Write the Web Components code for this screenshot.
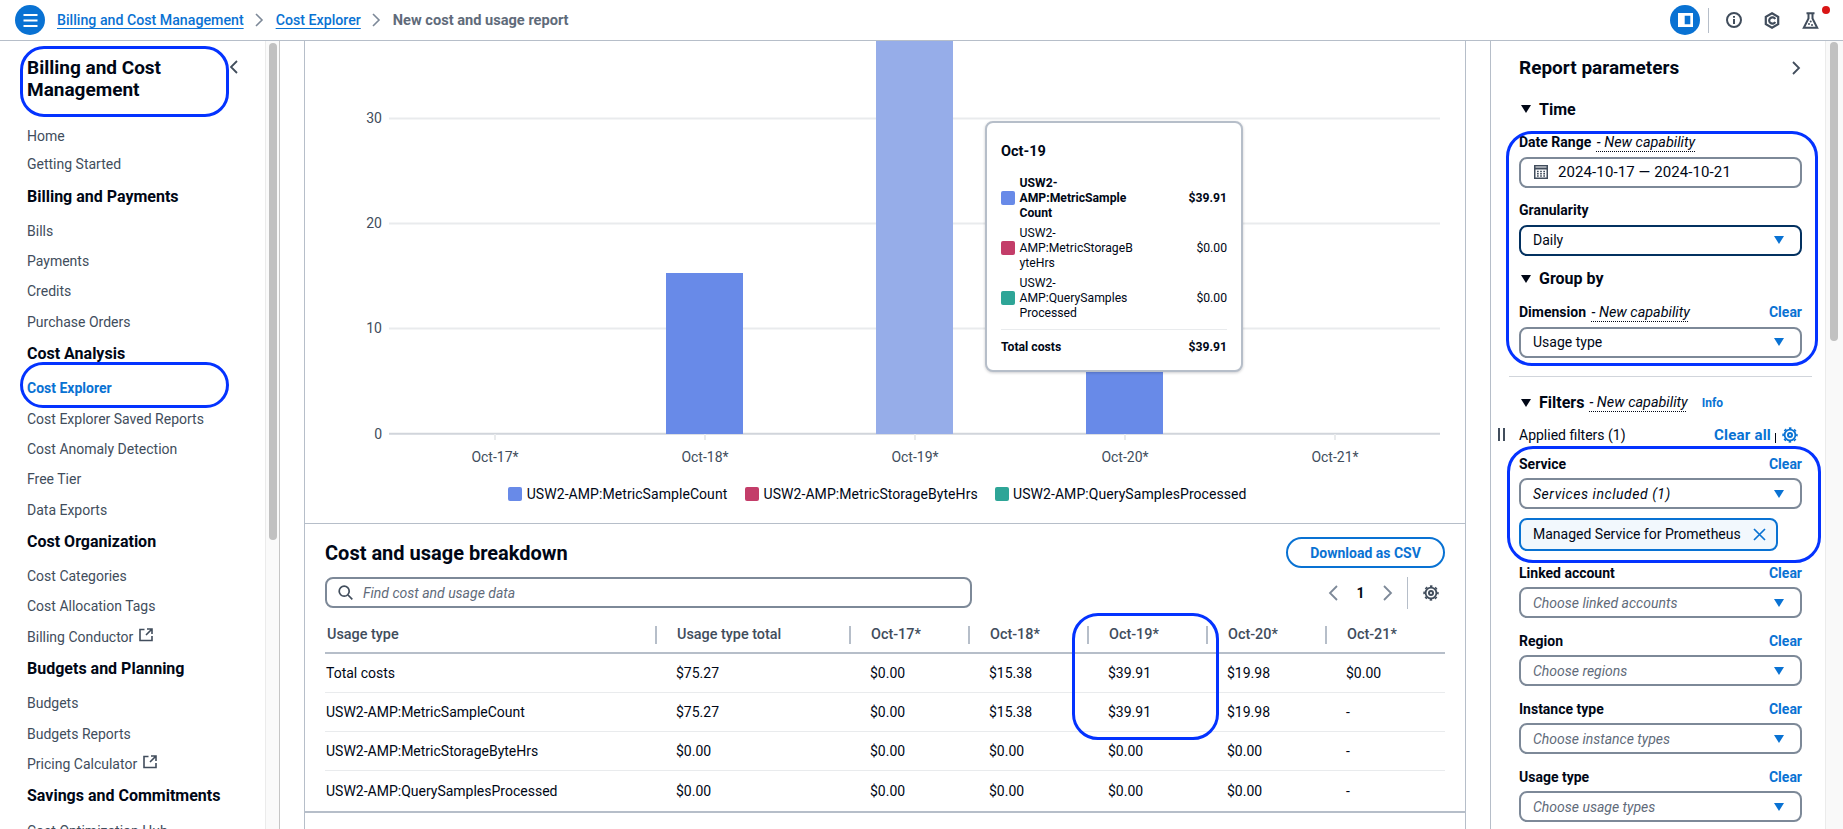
<!DOCTYPE html>
<html lang="en"><head><meta charset="utf-8"><title>Cost Explorer</title>
<style>
html,body{margin:0;padding:0;height:829px;overflow:hidden;background:#fff;}
body{font-family:Roboto,"Open Sans",sans-serif;font-size:14px;color:#000716;}
</style></head><body>
<app-shell></app-shell>
<script>
const GEAR=`<svg width="16" height="16" viewBox="0 0 16 16" fill="none" stroke="currentColor"><circle cx="8" cy="8" r="2" stroke-width="2"/><circle cx="8" cy="8" r="5.4" stroke-width="1.8"/><circle cx="8" cy="8" r="6.9" stroke-width="1.6" stroke-dasharray="2.6 2.82" stroke-dashoffset="1.3"/></svg>`;
const CARET=`<svg width="10" height="8" viewBox="0 0 10 8"><path d="M0 0h10L5 8z" fill="#0972d3"/></svg>`;

class AppShell extends HTMLElement{connectedCallback(){
 const s=this.attachShadow({mode:'open'});
 s.innerHTML=`<style>
 :host{display:block;position:relative;width:1843px;height:829px;overflow:hidden}
 .body{display:flex;height:788px}
 .gap{width:24px;flex:none}
 </style>
 <top-bar></top-bar>
 <div class="body">
  <side-nav></side-nav><div class="gap"></div>
  <main-content></main-content><div class="gap"></div>
  <report-panel></report-panel>
 </div>
 <annot-box style="left:20px;top:46px;width:209px;height:71px;--r:24px"></annot-box>
 <annot-box style="left:20px;top:362px;width:209px;height:46px;--r:23px"></annot-box>
 <annot-box style="left:1072px;top:613px;width:147px;height:127px;--r:26px"></annot-box>
 <annot-box style="left:1506px;top:130.5px;width:312px;height:235.5px;--r:26px"></annot-box>
 <annot-box style="left:1507px;top:446px;width:314px;height:117px;--r:26px"></annot-box>`;
}}
class AnnotBox extends HTMLElement{connectedCallback(){
 const s=this.attachShadow({mode:'open'});
 s.innerHTML=`<style>:host{display:block;position:absolute;box-sizing:border-box;border:3.5px solid #0433ff;border-radius:var(--r);pointer-events:none}</style>`;
}}
class TopBar extends HTMLElement{connectedCallback(){
 const s=this.attachShadow({mode:'open'});
 s.innerHTML=`<style>
 :host{display:flex;align-items:center;height:40px;border-bottom:1px solid #b6bec9;padding-left:15px;box-sizing:content-box;font-size:14.2px}
 .menu{width:30px;height:30px;border-radius:50%;background:#0972d3;display:flex;align-items:center;justify-content:center;flex:none;margin-right:12px}
 a{color:#0972d3;text-decoration:underline;text-underline-offset:3px;font-weight:500}
 .chev{width:32px;display:flex;justify-content:center;flex:none}
 .cur{color:#5f6b7a;font-weight:700;font-size:14.6px}
 .sp{flex:1}
 .btn{width:30px;height:30px;border-radius:50%;background:#0972d3;display:flex;align-items:center;justify-content:center;margin-right:8px}
 .sep{width:1px;height:25px;background:#b6bec9;margin-right:13px}
 .ic{width:24px;height:24px;display:flex;align-items:center;justify-content:center;position:relative;margin-right:14px;color:#414d5c}
 .dot{position:absolute;right:-8px;top:-2px;width:8px;height:8px;border-radius:50%;background:#d91515}
 </style>
 <div class="menu"><svg width="15" height="13" viewBox="0 0 15 13" stroke="#fff" stroke-width="2"><path d="M0.5 1h14M0.5 6.5h14M0.5 12h14"/></svg></div>
 <a>Billing and Cost Management</a>
 <span class="chev"><svg width="9" height="14" viewBox="0 0 9 14" fill="none" stroke="#7d8998" stroke-width="1.6"><path d="M1 1l6 6-6 6"/></svg></span>
 <a>Cost Explorer</a>
 <span class="chev"><svg width="9" height="14" viewBox="0 0 9 14" fill="none" stroke="#7d8998" stroke-width="1.6"><path d="M1 1l6 6-6 6"/></svg></span>
 <span class="cur">New cost and usage report</span>
 <span class="sp"></span>
 <div class="btn"><svg width="15" height="14" viewBox="0 0 15 14"><path fill="#fff" fill-rule="evenodd" d="M0 0h15v14H0zM6.7 2.7v8.6h5.6V2.7z"/></svg></div>
 <div class="sep"></div>
 <div class="ic"><svg width="16" height="16" viewBox="0 0 16 16" fill="none" stroke="currentColor" stroke-width="2"><circle cx="8" cy="8" r="7"/><path d="M8 7v5M8 4v1.8"/></svg></div>
 <div class="ic"><svg width="16" height="17" viewBox="0 0 16 17" fill="none" stroke="currentColor" stroke-width="2.2"><path d="M8 1.3l6.2 3.6v7.2L8 15.7l-6.2-3.6V4.9z"/><path d="M11.2 7A3.2 3.2 0 1 0 11.2 10"/></svg></div>
 <div class="ic" style="margin-right:21px"><svg width="17" height="17" viewBox="0 0 17 17" fill="none" stroke="currentColor" stroke-width="2"><path d="M4.5 1.2h8M6.5 1.2v5.3L1.8 15.8h13.4L10.5 6.5V1.2"/><circle cx="7" cy="12" r="1" fill="currentColor" stroke="none"/><circle cx="10" cy="13" r="1" fill="currentColor" stroke="none"/><circle cx="8.7" cy="9.5" r="1" fill="currentColor" stroke="none"/></svg><span class="dot"></span></div>`;
}}
class NavItem extends HTMLElement{connectedCallback(){
 const s=this.attachShadow({mode:'open'});
 const ext=this.hasAttribute('ext');
 s.innerHTML=`<style>
 :host{display:flex;align-items:center;height:30.3px;font-size:14px;color:#414d5c;white-space:nowrap}
 :host([active]){color:#0972d3;font-weight:700}
 :host([tight]){margin-bottom:-2px}
 svg{margin:-4px 0 0 6px}
 </style><slot></slot>${ext?`<svg width="14" height="14" viewBox="0 0 14 14" fill="none" stroke="#414d5c" stroke-width="1.6"><path d="M5.5 1.5H1v11h12V8M8 1h5v5M13 1L7 7"/></svg>`:''}`;
}}
class NavHead extends HTMLElement{connectedCallback(){
 const s=this.attachShadow({mode:'open'});
 s.innerHTML=`<style>:host{display:flex;align-items:center;box-sizing:border-box;height:36.3px;padding-bottom:2.5px;font-size:16px;font-weight:700;color:#000716;white-space:nowrap}</style><slot></slot>`;
}}
class SideNav extends HTMLElement{connectedCallback(){
 const s=this.attachShadow({mode:'open'});
 const L=[['h','Home','tight'],['i','Getting Started'],['g','Billing and Payments'],['i','Bills'],['i','Payments'],['i','Credits'],['i','Purchase Orders'],['g','Cost Analysis'],['i','Cost Explorer','active'],['i','Cost Explorer Saved Reports'],['i','Cost Anomaly Detection'],['i','Free Tier'],['i','Data Exports'],['g','Cost Organization'],['i','Cost Categories'],['i','Cost Allocation Tags'],['i','Billing Conductor','ext'],['g','Budgets and Planning'],['i','Budgets'],['i','Budgets Reports'],['i','Pricing Calculator','ext'],['g','Savings and Commitments'],['i','Cost Optimization Hub']];
 s.innerHTML=`<style>
 :host{display:flex;width:280px;flex:none;height:788px;overflow:hidden}
 .in{flex:1;min-width:0;padding:16px 0 0 27px;box-sizing:border-box;position:relative;overflow:hidden}
 .t{font-size:19px;font-weight:700;line-height:22px;color:#000716;margin-bottom:19.85px;width:180px}
 .back{position:absolute;left:230px;top:19px}
 .track{width:15px;background:#fafafa;border-left:1px solid #ebebeb;border-right:1px solid #c6c6c6;box-sizing:border-box;flex:none;padding:2px 0 0 3px}
 .thumb{width:7.5px;height:497px;background:#c1c1c1;border-radius:4px}
 </style>
 <div class="in"><div class="t">Billing and Cost Management</div>
 <svg class="back" width="8" height="14" viewBox="0 0 8 14" fill="none" stroke="#414d5c" stroke-width="1.8"><path d="M7 1L1 7l6 6"/></svg>
 ${L.map(([k,t,a])=>k==='g'?`<nav-head>${t}</nav-head>`:`<nav-item ${a||(k==='h'?'tight':'')}>${t}</nav-item>`).join('')}
 </div><div class="track"><div class="thumb"></div></div>`;
}}
class MainContent extends HTMLElement{connectedCallback(){
 const s=this.attachShadow({mode:'open'});
 s.innerHTML=`<style>
 :host{display:block;width:1162px;flex:none;box-sizing:border-box;border-left:1px solid #b6bec9;border-right:1px solid #b6bec9;height:788px;overflow:hidden}
 </style><cost-chart></cost-chart><breakdown-table></breakdown-table>`;
}}
class CostChart extends HTMLElement{connectedCallback(){
 const s=this.attachShadow({mode:'open'});
 // svg origin = page (305,41)
 const ox=305,oy=41,X=x=>x-ox,Y=y=>y-oy;
 const grid=[[118.4,'30'],[223.4,'20'],[328.4,'10']];
 const xs=[['Oct-17*',495],['Oct-18*',705],['Oct-19*',915],['Oct-20*',1125],['Oct-21*',1335]];
 const leg=[[508,'#688ae8','USW2-AMP:MetricSampleCount',526.7],[745,'#c33d69','USW2-AMP:MetricStorageByteHrs',763.5],[995,'#2ea597','USW2-AMP:QuerySamplesProcessed',1013]];
 s.innerHTML=`<style>
 :host{display:block;position:relative;height:482px;border-bottom:1px solid #b6bec9;box-sizing:content-box}
 svg{display:block;font-family:Roboto,sans-serif;font-size:14px}
 text{fill:#414d5c}
 .lg{fill:#000716;letter-spacing:.07px}
 </style>
 <svg width="1160" height="482" viewBox="0 0 1160 482">
 ${grid.map(([y,l])=>`<line x1="${X(389)}" x2="${X(1440)}" y1="${Y(y)}" y2="${Y(y)}" stroke="#e9ebed" stroke-width="2"/><text x="${X(382)}" y="${Y(y)+5}" text-anchor="end">${l}</text>`).join('')}
 <text x="${X(382)}" y="${Y(433.5)+5}" text-anchor="end">0</text>
 <line x1="${X(389)}" x2="${X(1440)}" y1="${Y(433.8)}" y2="${Y(433.8)}" stroke="#d1d5db" stroke-width="2"/>
 ${xs.map(([l,x])=>`<line x1="${X(x)}" x2="${X(x)}" y1="${Y(434)}" y2="${Y(440)}" stroke="#e9ebed" stroke-width="2"/>`).join('')}
 <rect x="${X(666)}" y="${Y(273)}" width="77" height="161" fill="#688ae8"/>
 <rect x="${X(876)}" y="0" width="77" height="${Y(434)}" fill="#96ade9"/>
 <rect x="${X(1086)}" y="${Y(300)}" width="77" height="134" fill="#688ae8"/>
 ${xs.map(([l,x])=>`<text x="${X(x)}" y="${Y(461.5)}" text-anchor="middle">${l}</text>`).join('')}
 ${leg.map(([x,c,l,tx])=>`<rect x="${X(x)}" y="${Y(487)}" width="14" height="14" rx="2" fill="${c}"/><text class="lg" x="${X(tx)}" y="${Y(499)}">${l}</text>`).join('')}
 </svg>
 <chart-tip style="left:680px;top:80px"></chart-tip>`;
}}
class ChartTip extends HTMLElement{connectedCallback(){
 const s=this.attachShadow({mode:'open'});
 const R=(c,l,v,b)=>`<div class="r ${b?'b':''}"><i style="background:${c}"></i><span class="n">${l}</span><span class="v">${v}</span></div>`;
 s.innerHTML=`<style>
 :host{display:block;position:absolute;width:258px;height:251px;box-sizing:border-box;background:#fff;border:2px solid #b6bec9;border-radius:8px;box-shadow:0 1px 3px rgba(0,7,22,.2);padding:19px 14px 0 14px;font-size:12.2px;color:#000716}
 h4{margin:0;font-size:14.5px;font-weight:700;line-height:20px;margin-bottom:11px}
 .r{display:flex;align-items:center;height:50px}
 i{width:14px;height:14px;border-radius:2px;flex:none;margin-right:4.5px}
 .n{width:120px;line-height:15px;flex:none;white-space:nowrap}
 .v{margin-left:auto}
 .b{font-weight:700}
 .tot{display:flex;justify-content:space-between;border-top:1px solid #e9ebed;margin-top:6px;padding-top:9px;font-weight:700;line-height:16px}
 </style>
 <h4>Oct-19</h4>
 ${R('#688ae8','USW2-<br>AMP:MetricSample<br>Count','$39.91',1)}
 ${R('#c33d69','USW2-<br>AMP:MetricStorageB<br>yteHrs','$0.00')}
 ${R('#2ea597','USW2-<br>AMP:QuerySamples<br>Processed','$0.00')}
 <div class="tot"><span>Total costs</span><span>$39.91</span></div>`;
}}
class BreakdownTable extends HTMLElement{connectedCallback(){
 const s=this.attachShadow({mode:'open'});
 const H=['Usage type','Usage type total','Oct-17*','Oct-18*','Oct-19*','Oct-20*','Oct-21*'];
 const D=[['Total costs','$75.27','$0.00','$15.38','$39.91','$19.98','$0.00'],['USW2-AMP:MetricSampleCount','$75.27','$0.00','$15.38','$39.91','$19.98','-'],['USW2-AMP:MetricStorageByteHrs','$0.00','$0.00','$0.00','$0.00','$0.00','-'],['USW2-AMP:QuerySamplesProcessed','$0.00','$0.00','$0.00','$0.00','$0.00','-']];
 s.innerHTML=`<style>
 :host{display:block;box-sizing:border-box;height:289px;padding:12px 20px 0 20px;border-bottom:2px solid #b6bec9;font-size:14px}
 .top{display:flex;justify-content:space-between;align-items:center;height:33px;margin-bottom:7.5px}
 h2{margin:0;font-size:20px;font-weight:700;color:#000716}
 .dl{width:159px;height:31px;box-sizing:border-box;border:2px solid #0972d3;border-radius:16px;color:#0972d3;font-weight:700;display:flex;align-items:center;justify-content:center}
 .tools{display:flex;align-items:center;height:32px;margin-bottom:8.5px}
 .search{width:647px;height:31px;box-sizing:border-box;border:2px solid #7d8998;border-radius:8px;display:flex;align-items:center;padding-left:11px;color:#5f6b7a;font-style:italic;flex:none}
 .search svg{margin-right:10px}
 .pg{display:flex;align-items:center;margin-left:auto;color:#7d8998}
 .one{color:#000716;font-weight:700;width:45px;text-align:center}
 .div{width:1px;height:32px;background:#b6bec9;margin:0 15px 0 14px}
 .gear{color:#414d5c;display:flex;margin-right:6px}
 .grid{display:grid;grid-template-columns:330px 194px 119px 119px 119px 119px 120px}
 .hc{height:37px;display:flex;align-items:center;font-weight:500;font-size:14.4px;color:#414d5c;border-bottom:2px solid #b6bec9;box-sizing:border-box;white-space:nowrap}
 .hc span{display:block;height:18px;line-height:18px;padding-left:20px;border-left:2px solid #b6bec9;box-sizing:border-box}
 .hc:first-child span{border:0;padding-left:2px}
 .c{height:39px;display:flex;align-items:center;padding-left:21px;border-bottom:1px solid #e9ebed;box-sizing:border-box;white-space:nowrap;color:#000716}
 .c.f{padding-left:1px}
 .last{border-bottom:0}
 </style>
 <div class="top"><h2>Cost and usage breakdown</h2><div class="dl">Download as CSV</div></div>
 <div class="tools">
  <div class="search"><svg width="15" height="15" viewBox="0 0 15 15" fill="none" stroke="#414d5c" stroke-width="1.7"><circle cx="6.2" cy="6.2" r="5"/><path d="M10 10l4.3 4.3"/></svg>Find cost and usage data</div>
  <div class="pg"><svg width="10" height="16" viewBox="0 0 10 16" fill="none" stroke="currentColor" stroke-width="1.8"><path d="M9 1L2 8l7 7"/></svg><span class="one">1</span><svg width="10" height="16" viewBox="0 0 10 16" fill="none" stroke="currentColor" stroke-width="1.8"><path d="M1 1l7 7-7 7"/></svg><span class="div"></span><span class="gear">${GEAR}</span></div>
 </div>
 <div class="grid">
 ${H.map(h=>`<div class="hc"><span>${h}</span></div>`).join('')}
 ${D.map((r,ri)=>r.map((c,i)=>`<div class="c ${i?'':'f'} ${ri==3?'last':''}">${c}</div>`).join('')).join('')}
 </div>`;
}}
class SelectField extends HTMLElement{connectedCallback(){
 const s=this.attachShadow({mode:'open'});
 const a=n=>this.getAttribute(n);
 const ph=this.hasAttribute('ph'),it=this.hasAttribute('it'),cap=this.hasAttribute('cap'),clr=this.hasAttribute('clear'),foc=this.hasAttribute('focus');
 s.innerHTML=`<style>
 :host{display:block;margin-bottom:12.3px}
 .l{display:flex;justify-content:space-between;height:20px;line-height:20px;font-weight:700;color:#000716;font-size:14px;margin-bottom:4.7px}
 .cap{font-weight:400;font-style:italic;font-size:14.4px;margin-left:2px}.cap u{text-decoration:underline dotted 1px;text-underline-offset:4px}
 .clr{color:#0972d3;font-weight:700}
 .b{height:31px;box-sizing:border-box;border:2px solid ${foc?'#033160':'#7d8998'};border-radius:8px;display:flex;align-items:center;padding:0 16px 0 12px;justify-content:space-between;${ph?'color:#5f6b7a;font-style:italic;':it?'font-style:italic;letter-spacing:.55px;':''}}
 </style>
 <div class="l"><span>${a('label')}${cap?`<span class="cap"> <u>- New capability</u></span>`:''}</span>${clr?'<span class="clr">Clear</span>':''}</div>
 <div class="b"><span>${a('value')}</span>${CARET}</div>`;
}}
class ReportPanel extends HTMLElement{connectedCallback(){
 const s=this.attachShadow({mode:'open'});
 s.innerHTML=`<style>
 :host{display:flex;width:353px;height:788px;flex:none;border-left:1px solid #b6bec9;box-sizing:border-box;overflow:hidden}
 .in{width:335px;flex:none;padding:15px 23px 0 28px;box-sizing:border-box;border-right:1px solid #ebebeb}
 .track{flex:1;background:#f9f9f9;padding:1px 0 0 4px}
 .thumb{width:8px;height:299px;background:#c1c1c1;border-radius:4px}
 h2{margin:0;font-size:19px;font-weight:700;line-height:24px;display:flex;justify-content:space-between;align-items:center;padding-right:1px}
 .sec{display:flex;align-items:center;height:24px;font-size:16px;font-weight:700;gap:8px;padding-left:2px}
 .sec .cap{font-weight:400;font-style:italic;font-size:14.4px;margin-left:-3px}.cap u{text-decoration:underline dotted 1px;text-underline-offset:4px}
 .info{font-size:12px;font-weight:700;color:#0972d3;margin-left:6px}
 .date{display:block;margin-bottom:12.3px}
 .date .l{height:20px;line-height:20px;font-weight:700;margin-bottom:4.7px}
 .date .cap{font-weight:400;font-size:14.4px;margin-left:2px}
 .date .b{height:31px;box-sizing:border-box;border:2px solid #7d8998;border-radius:8px;display:flex;align-items:center;padding-left:13px;gap:10px;white-space:nowrap;font-size:15px;letter-spacing:.1px}
 hr{border:0;height:1px;background:#d1d5db;margin:18px -10px 14px -10px}
 .ap{display:flex;align-items:center;height:20px;margin:10px 0 9px -21.5px}
 .grip{width:7px;height:13px;border-left:2px solid #414d5c;border-right:2px solid #414d5c;box-sizing:border-box;margin-right:14.5px}
 .ca{margin-left:auto;color:#0972d3;font-weight:700;font-size:15px;letter-spacing:.2px}
 .bar{margin:0 6px 0 4px;width:1px;height:10px;background:#000716;align-self:flex-end;margin-bottom:2px}
 .g{color:#0972d3;display:flex;margin-right:4px}
 .tok{width:259px;height:33px;box-sizing:border-box;border:2px solid #0972d3;border-radius:8px;background:#f2f8fd;display:flex;align-items:center;justify-content:space-between;padding:0 10px 0 12px;margin:-4px 0 12px;white-space:nowrap}
 </style>
 <div class="in">
 <h2>Report parameters<svg width="9" height="14" viewBox="0 0 9 14" fill="none" stroke="#414d5c" stroke-width="1.8"><path d="M1 1l6 6-6 6"/></svg></h2>
 <div class="sec" style="margin:17px 0 11px"><svg width="10" height="8" viewBox="0 0 10 8"><path d="M0 0h10L5 8z" fill="#000716"/></svg>Time</div>
 <div class="date"><div class="l">Date Range<span class="cap"> <i><u>- New capability</u></i></span></div>
 <div class="b"><svg width="14" height="14" viewBox="0 0 14 14" fill="none" stroke="#414d5c"><rect x=".75" y=".75" width="12.5" height="12.5" stroke-width="1.5"/><path d="M1 3.5h12" stroke-width="2"/><path d="M3 6.5h8M3 8.75h8M3 11h8" stroke-width="1.3" stroke-dasharray="1.7 1.45"/></svg>2024-10-17 — 2024-10-21</div></div>
 <select-field label="Granularity" value="Daily" focus></select-field>
 <div class="sec" style="margin:-1px 0 11px"><svg width="10" height="8" viewBox="0 0 10 8"><path d="M0 0h10L5 8z" fill="#000716"/></svg>Group by</div>
 <select-field label="Dimension" cap clear value="Usage type" style="margin:0"></select-field>
 <hr>
 <div class="sec"><svg width="10" height="8" viewBox="0 0 10 8"><path d="M0 0h10L5 8z" fill="#000716"/></svg>Filters<span class="cap"><u>- New capability</u></span><span class="info">Info</span></div>
 <div class="ap"><span class="grip"></span>Applied filters (1)<span class="ca">Clear all</span><span class="bar"></span><span class="g">${GEAR}</span></div>
 <select-field label="Service" clear it value="Services included (1)"></select-field>
 <div class="tok">Managed Service for Prometheus<svg width="13" height="13" viewBox="0 0 13 13" fill="none" stroke="#0972d3" stroke-width="1.7"><path d="M1 1l11 11M12 1L1 12"/></svg></div>
 <select-field label="Linked account" clear ph value="Choose linked accounts"></select-field>
 <select-field label="Region" clear ph value="Choose regions"></select-field>
 <select-field label="Instance type" clear ph value="Choose instance types"></select-field>
 <select-field label="Usage type" clear ph value="Choose usage types"></select-field>
 </div>
 <div class="track"><div class="thumb"></div></div>`;
}}
const defs={'annot-box':AnnotBox,'top-bar':TopBar,'nav-item':NavItem,'nav-head':NavHead,'side-nav':SideNav,'chart-tip':ChartTip,'cost-chart':CostChart,'breakdown-table':BreakdownTable,'main-content':MainContent,'select-field':SelectField,'report-panel':ReportPanel,'app-shell':AppShell};
for(const k in defs)customElements.define(k,defs[k]);
</script></body></html>
